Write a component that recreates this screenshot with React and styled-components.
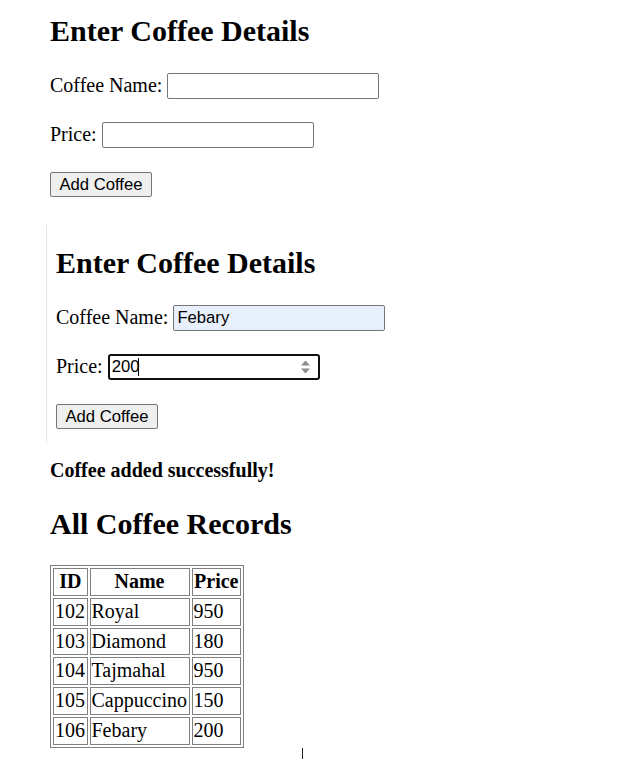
import React from "react";
import styled, { createGlobalStyle } from "styled-components";

const GlobalStyle = createGlobalStyle`
  html, body { margin: 0; padding: 0; background: #ffffff; }
  body {
    font-family: "Liberation Serif", "Times New Roman", serif;
    font-size: 20px;
    color: #000000;
  }
`;

const Page = styled.div`
  position: relative;
  padding: 14px 0 20px 50px;
  min-height: 760px;
  box-sizing: border-box;
`;

const FormBlock = styled.section`
  display: flex;
  flex-direction: column;
  align-items: flex-start;
  ${(p) =>
    p.$framed
      ? `
    margin: 28px 0 0 -4px;
    padding: 21px 0 14px 9px;
    border-left: 1px solid #e6e6e6;
    width: 380px;
  `
      : ""}
`;

const Heading = styled.h2`
  margin: ${(p) => p.$mt || 0}px 0 0;
  font-size: 30px;
  font-weight: bold;
  line-height: 34.5px;
`;

const Row = styled.div`
  display: flex;
  align-items: center;
  gap: 5px;
  height: 26px;
  margin-top: ${(p) => p.$mt}px;
`;

const Label = styled.label`
  font-size: 20px;
  line-height: 23px;
  margin-top: -1px;
`;

const Field = styled.div`
  position: relative;
  display: inline-flex;
`;

const TextInput = styled.input`
  box-sizing: border-box;
  width: 212px;
  height: 26px;
  padding: 1px 3px;
  font-family: "Liberation Sans", Arial, sans-serif;
  font-size: 16.67px;
  color: #000;
  background: ${(p) => (p.$autofill ? "#e8f0fe" : "#ffffff")};
  border: ${(p) => (p.$focused ? "2px solid #101010" : "1px solid #767676")};
  border-radius: ${(p) => (p.$focused ? "3px" : "2px")};
  outline: none;
  padding-left: ${(p) => (p.$focused ? "2px" : "3px")};
`;

const Spinner = styled.svg`
  position: absolute;
  right: 9px;
  top: 6px;
  width: 11px;
  height: 14px;
  pointer-events: none;
`;

const Caret = styled.span`
  position: absolute;
  left: 30px;
  top: 4px;
  width: 1px;
  height: 18px;
  background: #000;
`;

const Button = styled.button`
  box-sizing: border-box;
  height: 25px;
  width: 102px;
  padding: 1px 6px;
  font-family: "Liberation Sans", Arial, sans-serif;
  font-size: 16.67px;
  color: #000;
  background: #efefef;
  border: 1px solid #767676;
  border-radius: 2px;
  margin-top: 24px;
`;

const Message = styled.p`
  margin: 15.5px 0 0;
  font-size: 20px;
  font-weight: bold;
  line-height: 23px;
`;

const Table = styled.table`
  margin-top: 23.5px;
  border: 1px solid #808080;
  border-spacing: 2.5px;
  font-size: 20px;
`;

const Th = styled.th`
  border: 1px solid #808080;
  padding: 1px 1.5px;
  line-height: 23.8px;
  font-weight: bold;
  text-align: center;
`;

const Td = styled.td`
  border: 1px solid #808080;
  padding: 1px 1.5px 1px 1px;
  line-height: 23.8px;
  text-align: left;
`;

const Pointer = styled.span`
  position: absolute;
  left: 302px;
  top: 748px;
  width: 1px;
  height: 11px;
  background: #222;
`;

const records = [
  { id: 102, name: "Royal", price: 950 },
  { id: 103, name: "Diamond", price: 180 },
  { id: 104, name: "Tajmahal", price: 950 },
  { id: 105, name: "Cappuccino", price: 150 },
  { id: 106, name: "Febary", price: 200 },
];

function CoffeeForm({ framed, name, price }) {
  return (
    <FormBlock $framed={framed}>
      <Heading>Enter Coffee Details</Heading>
      <Row $mt={24.5}>
        <Label>Coffee Name:</Label>
        <TextInput type="text" defaultValue={name} $autofill={!!name} readOnly />
      </Row>
      <Row $mt={23}>
        <Label>Price:</Label>
        <Field>
          <TextInput type="text" defaultValue={price} $focused={!!price} readOnly />
          {price && (
            <>
              <Caret />
              <Spinner viewBox="0 0 11 14">
                <path d="M5.5 0.5 L10 5.5 L1 5.5 Z" fill="#8d8d8d" />
                <path d="M1 8.5 L10 8.5 L5.5 13.5 Z" fill="#8d8d8d" />
              </Spinner>
            </>
          )}
        </Field>
      </Row>
      <Button type="button">Add Coffee</Button>
    </FormBlock>
  );
}

export default function App() {
  return (
    <>
      <GlobalStyle />
      <Page>
        <CoffeeForm />
        <CoffeeForm framed name="Febary" price="200" />
        <Message>Coffee added successfully!</Message>
        <Heading $mt={25.5}>All Coffee Records</Heading>
        <Table>
          <thead>
            <tr>
              <Th>ID</Th>
              <Th>Name</Th>
              <Th>Price</Th>
            </tr>
          </thead>
          <tbody>
            {records.map((r) => (
              <tr key={r.id}>
                <Td>{r.id}</Td>
                <Td>{r.name}</Td>
                <Td>{r.price}</Td>
              </tr>
            ))}
          </tbody>
        </Table>
        <Pointer />
      </Page>
    </>
  );
}
